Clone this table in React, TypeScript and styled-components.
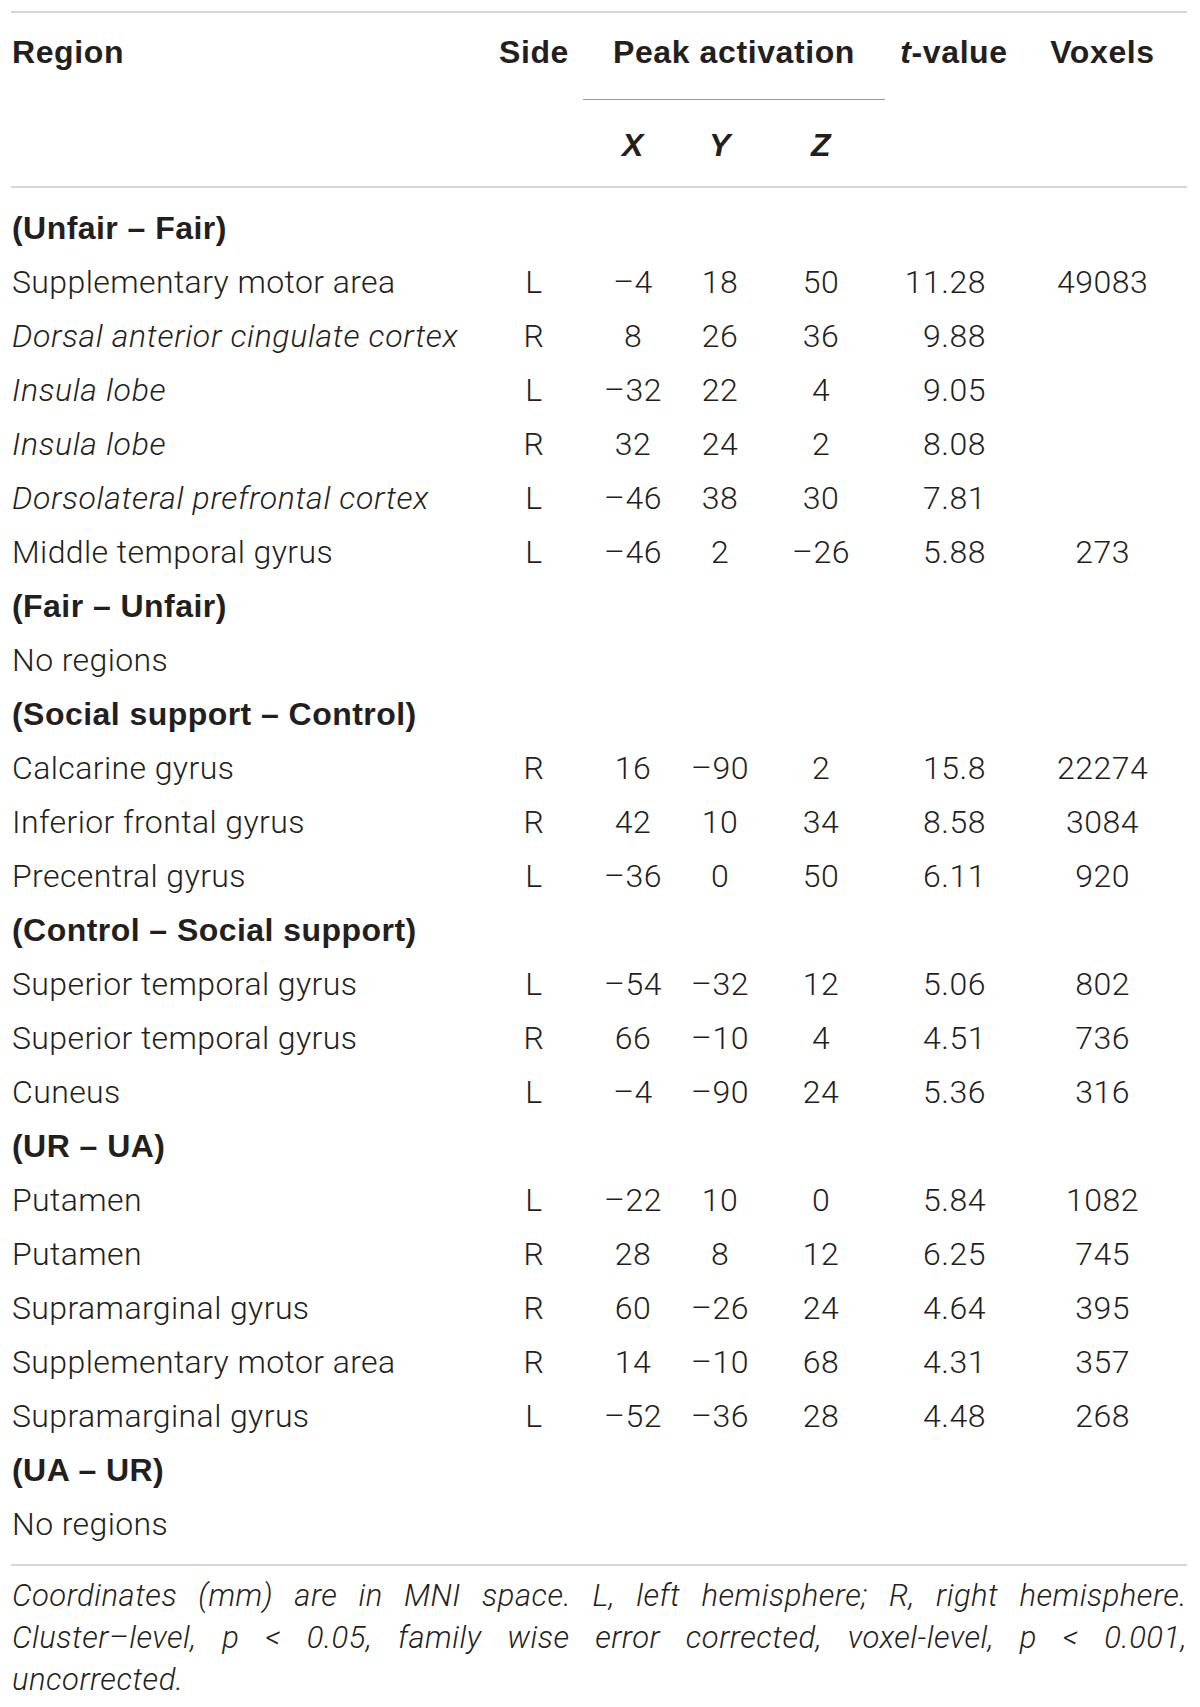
import React from "react";
import styled, { createGlobalStyle, css } from "styled-components";

const GlobalStyle = createGlobalStyle`
  html, body { margin: 0; padding: 0; background: #ffffff; }
  body { font-family: Roboto, "Liberation Sans", Arial, sans-serif; color: #231f20; }
`;

const COLS = "479px 88px 110px 64px 138px 128px 169px";

const Page = styled.div`
  width: 1176px;
  margin: 11px 0 0 11px;
`;

const Table = styled.div`
  border-top: 2px solid #d6d6d6;
`;

const Head = styled.div`
  display: grid;
  grid-template-columns: ${COLS};
  grid-template-rows: 87px 86px;
  border-bottom: 2px solid #d6d6d6;
  font-family: "Liberation Sans", Arial, sans-serif;
  font-weight: 700;
  font-size: 32px;
  line-height: 40px;
  letter-spacing: 0.6px;
`;

const HeadCell = styled.div<{ $align?: "left" | "center"; $row?: number; $col?: number; $italic?: boolean }>`
  grid-row: ${(p) => p.$row ?? 1};
  ${(p) =>
    p.$col &&
    css`
      grid-column: ${p.$col};
    `}
  text-align: ${(p) => p.$align ?? "center"};
  padding-top: ${(p) => ((p.$row ?? 1) === 1 ? 19 : 25)}px;
  padding-left: ${(p) => (p.$align === "left" ? 1 : 0)}px;
  font-style: ${(p) => (p.$italic ? "italic" : "normal")};
  white-space: nowrap;
`;

const PeakCell = styled.div`
  grid-row: 1;
  grid-column: 3 / 6;
  padding: 0 5px;
  display: flex;
`;

const PeakInner = styled.div`
  flex: 1;
  text-align: center;
  padding-top: 19px;
  border-bottom: 1.5px solid #9b9b9b;
  white-space: nowrap;
`;

const Body = styled.div`
  padding: 13px 0 13px;
`;

const Row = styled.div`
  display: grid;
  grid-template-columns: ${COLS};
  height: 54px;
  font-size: 32px;
  line-height: 54px;
  font-weight: 300;
  letter-spacing: 0.5px;
  white-space: nowrap;
`;

const GroupTitle = styled.div`
  grid-column: 1 / -1;
  padding-left: 1px;
  font-family: "Liberation Sans", Arial, sans-serif;
  font-weight: 700;
  letter-spacing: 0.45px;
`;

const RegionCell = styled.div<{ $italic?: boolean }>`
  padding-left: 1px;
  font-style: ${(p) => (p.$italic ? "italic" : "normal")};
  letter-spacing: ${(p) => (p.$italic ? 0.65 : 0.4)}px;
`;

const Cell = styled.div<{ $align?: "center" | "right" }>`
  text-align: ${(p) => p.$align ?? "center"};
  ${(p) =>
    p.$align === "right" &&
    css`
      padding-right: 32px;
    `}
`;

const Footer = styled.div`
  border-top: 2px solid #d6d6d6;
  padding: 9px 0 0 1px;
  font-size: 31px;
  line-height: 42px;
  font-weight: 300;
  font-style: italic;
  letter-spacing: 0.5px;
`;

const FooterLine = styled.div<{ $justify?: boolean }>`
  white-space: nowrap;
  ${(p) =>
    p.$justify &&
    css`
      white-space: normal;
      text-align: justify;
      text-align-last: justify;
    `}
`;

type DataRow = {
  region: string;
  italic?: boolean;
  side: string;
  x: string;
  y: string;
  z: string;
  t: string;
  voxels?: string;
};

type Group = { title: string; rows: DataRow[] };

const groups: Group[] = [
  {
    title: "(Unfair – Fair)",
    rows: [
      { region: "Supplementary motor area", side: "L", x: "–4", y: "18", z: "50", t: "11.28", voxels: "49083" },
      { region: "Dorsal anterior cingulate cortex", italic: true, side: "R", x: "8", y: "26", z: "36", t: "9.88" },
      { region: "Insula lobe", italic: true, side: "L", x: "–32", y: "22", z: "4", t: "9.05" },
      { region: "Insula lobe", italic: true, side: "R", x: "32", y: "24", z: "2", t: "8.08" },
      { region: "Dorsolateral prefrontal cortex", italic: true, side: "L", x: "–46", y: "38", z: "30", t: "7.81" },
      { region: "Middle temporal gyrus", side: "L", x: "–46", y: "2", z: "–26", t: "5.88", voxels: "273" },
    ],
  },
  { title: "(Fair – Unfair)", rows: [] },
  {
    title: "(Social support – Control)",
    rows: [
      { region: "Calcarine gyrus", side: "R", x: "16", y: "–90", z: "2", t: "15.8", voxels: "22274" },
      { region: "Inferior frontal gyrus", side: "R", x: "42", y: "10", z: "34", t: "8.58", voxels: "3084" },
      { region: "Precentral gyrus", side: "L", x: "–36", y: "0", z: "50", t: "6.11", voxels: "920" },
    ],
  },
  {
    title: "(Control – Social support)",
    rows: [
      { region: "Superior temporal gyrus", side: "L", x: "–54", y: "–32", z: "12", t: "5.06", voxels: "802" },
      { region: "Superior temporal gyrus", side: "R", x: "66", y: "–10", z: "4", t: "4.51", voxels: "736" },
      { region: "Cuneus", side: "L", x: "–4", y: "–90", z: "24", t: "5.36", voxels: "316" },
    ],
  },
  {
    title: "(UR – UA)",
    rows: [
      { region: "Putamen", side: "L", x: "–22", y: "10", z: "0", t: "5.84", voxels: "1082" },
      { region: "Putamen", side: "R", x: "28", y: "8", z: "12", t: "6.25", voxels: "745" },
      { region: "Supramarginal gyrus", side: "R", x: "60", y: "–26", z: "24", t: "4.64", voxels: "395" },
      { region: "Supplementary motor area", side: "R", x: "14", y: "–10", z: "68", t: "4.31", voxels: "357" },
      { region: "Supramarginal gyrus", side: "L", x: "–52", y: "–36", z: "28", t: "4.48", voxels: "268" },
    ],
  },
  { title: "(UA – UR)", rows: [] },
];

export default function App() {
  return (
    <>
      <GlobalStyle />
      <Page>
        <Table>
          <Head>
            <HeadCell $align="left">Region</HeadCell>
            <HeadCell>Side</HeadCell>
            <PeakCell>
              <PeakInner>Peak activation</PeakInner>
            </PeakCell>
            <HeadCell>
              <i>t</i>-value
            </HeadCell>
            <HeadCell>Voxels</HeadCell>
            <HeadCell $row={2} $col={3} $italic>
              X
            </HeadCell>
            <HeadCell $row={2} $col={4} $italic>
              Y
            </HeadCell>
            <HeadCell $row={2} $col={5} $italic>
              Z
            </HeadCell>
          </Head>
          <Body>
            {groups.map((g) => (
              <React.Fragment key={g.title}>
                <Row>
                  <GroupTitle>{g.title}</GroupTitle>
                </Row>
                {g.rows.length === 0 ? (
                  <Row>
                    <RegionCell>No regions</RegionCell>
                  </Row>
                ) : (
                  g.rows.map((r, i) => (
                    <Row key={i}>
                      <RegionCell $italic={r.italic}>{r.region}</RegionCell>
                      <Cell>{r.side}</Cell>
                      <Cell>{r.x}</Cell>
                      <Cell>{r.y}</Cell>
                      <Cell>{r.z}</Cell>
                      <Cell $align="right">{r.t}</Cell>
                      <Cell>{r.voxels ?? ""}</Cell>
                    </Row>
                  ))
                )}
              </React.Fragment>
            ))}
          </Body>
        </Table>
        <Footer>
          <FooterLine $justify>
            Coordinates (mm) are in MNI space. L, left hemisphere; R, right hemisphere.
          </FooterLine>
          <FooterLine $justify>
            Cluster–level, p &lt; 0.05, family wise error corrected, voxel-level, p &lt; 0.001,
          </FooterLine>
          <FooterLine>uncorrected.</FooterLine>
        </Footer>
      </Page>
    </>
  );
}
